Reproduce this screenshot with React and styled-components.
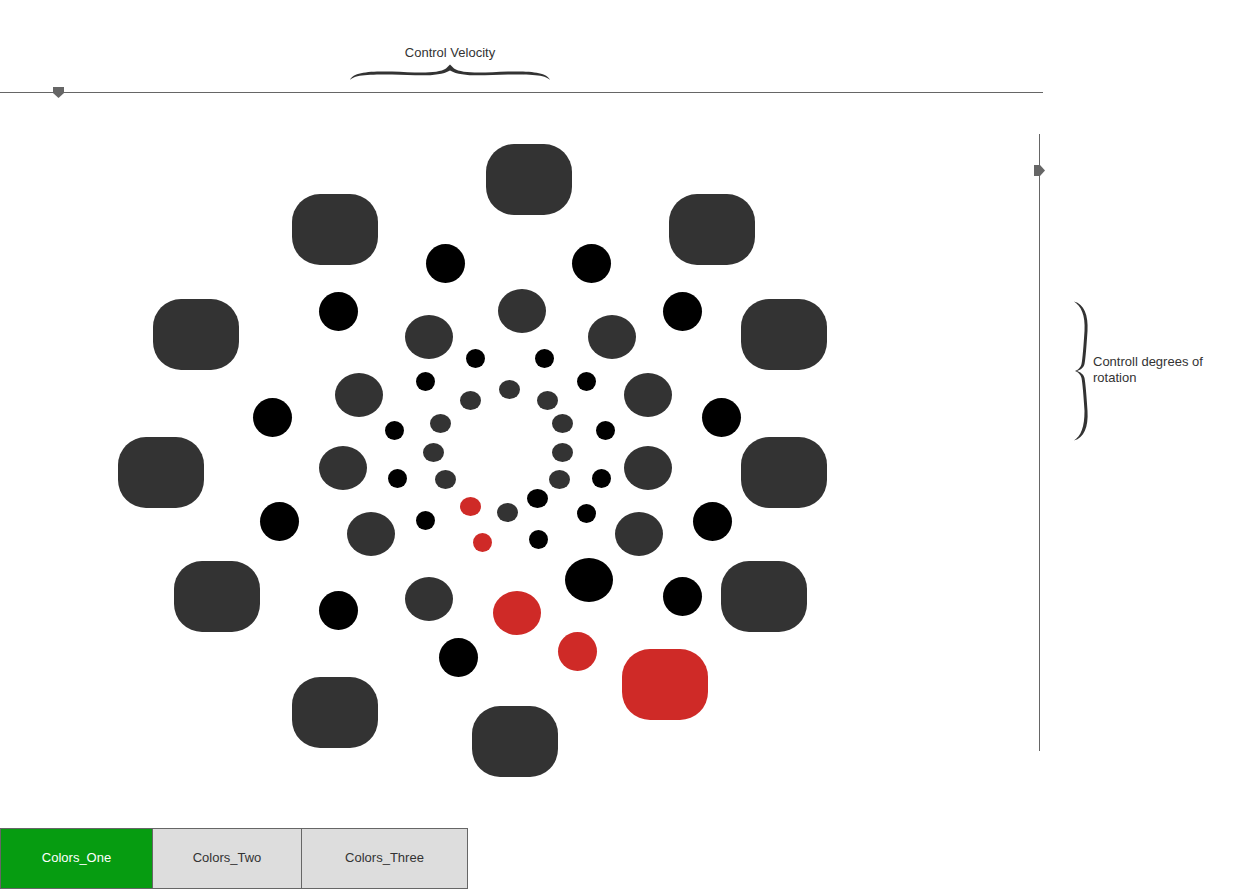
import React from "react";
import styled, { createGlobalStyle } from "styled-components";

const GlobalStyle = createGlobalStyle`
  html, body {
    margin: 0;
    padding: 0;
    background: #ffffff;
  }
  body {
    font-family: "Liberation Sans", Arial, sans-serif;
    color: #333333;
  }
`;

const COLORS = {
  dark: "#333333",
  black: "#000000",
  red: "#cf2a27",
};

// x / y are page coordinates, the canvas starts at y = 93
const CANVAS_TOP = 93;

const rects = [
  [486, 144, "dark"],
  [292, 194, "dark"],
  [669, 194, "dark"],
  [153, 299, "dark"],
  [741, 299, "dark"],
  [118, 437, "dark"],
  [741, 437, "dark"],
  [174, 561, "dark"],
  [721, 561, "dark"],
  [292, 677, "dark"],
  [472, 706, "dark"],
  [622, 649, "red"],
];

const dots = [
  // outer black ring
  [426, 244, 39, 39, "black"],
  [572, 244, 39, 39, "black"],
  [319, 292, 39, 39, "black"],
  [663, 292, 39, 39, "black"],
  [253, 398, 39, 39, "black"],
  [702, 398, 39, 39, "black"],
  [260, 502, 39, 39, "black"],
  [693, 502, 39, 39, "black"],
  [319, 591, 39, 39, "black"],
  [663, 577, 39, 39, "black"],
  [439, 638, 39, 39, "black"],
  [565, 558, 48, 44, "black"],
  // medium ring
  [498, 289, 48, 44, "dark"],
  [405, 315, 48, 44, "dark"],
  [588, 315, 48, 44, "dark"],
  [335, 373, 48, 44, "dark"],
  [624, 373, 48, 44, "dark"],
  [319, 446, 48, 44, "dark"],
  [624, 446, 48, 44, "dark"],
  [347, 512, 48, 44, "dark"],
  [615, 512, 48, 44, "dark"],
  [405, 577, 48, 44, "dark"],
  [493, 591, 48, 44, "red"],
  [558, 632, 39, 39, "red"],
  // small black ring
  [466, 349, 19, 19, "black"],
  [535, 349, 19, 19, "black"],
  [416, 372, 19, 19, "black"],
  [577, 372, 19, 19, "black"],
  [385, 421, 19, 19, "black"],
  [596, 421, 19, 19, "black"],
  [388, 469, 19, 19, "black"],
  [592, 469, 19, 19, "black"],
  [416, 511, 19, 19, "black"],
  [577, 504, 19, 19, "black"],
  [529, 530, 19, 19, "black"],
  [527, 489, 21, 19, "black"],
  // inner ring
  [499, 380, 21, 19, "dark"],
  [460, 391, 21, 19, "dark"],
  [537, 391, 21, 19, "dark"],
  [430, 414, 21, 19, "dark"],
  [552, 414, 21, 19, "dark"],
  [423, 443, 21, 19, "dark"],
  [552, 443, 21, 19, "dark"],
  [435, 470, 21, 19, "dark"],
  [549, 470, 21, 19, "dark"],
  [497, 503, 21, 19, "dark"],
  [460, 497, 21, 19, "red"],
  [473, 533, 19, 19, "red"],
];

const Page = styled.div`
  width: 1252px;
  height: 889px;
  display: flex;
  flex-direction: column;
  overflow: hidden;
`;

const Header = styled.div`
  height: 92px;
  display: flex;
  flex-direction: column;
  padding-top: 45px;
  box-sizing: border-box;
`;

const Annotation = styled.div`
  width: 200px;
  margin-left: 350px;
  display: flex;
  flex-direction: column;
  align-items: center;
`;

const Label = styled.div`
  font-size: 13px;
  line-height: 16px;
  color: #333333;
`;

const TopBrace = styled.svg`
  display: block;
  margin-top: 3px;
`;

const HTrack = styled.div`
  position: relative;
  width: 1043px;
  height: 1px;
  background: #666666;
`;

const HThumb = styled.svg`
  position: absolute;
  left: 53px;
  top: -5px;
`;

const Main = styled.div`
  height: 735px;
  display: flex;
  align-items: flex-start;
`;

const Canvas = styled.div`
  position: relative;
  width: 1034px;
  height: 100%;
  flex-shrink: 0;
`;

const Shape = styled.div`
  position: absolute;
  left: ${(p) => p.$x}px;
  top: ${(p) => p.$y - CANVAS_TOP}px;
  width: ${(p) => p.$w}px;
  height: ${(p) => p.$h}px;
  border-radius: ${(p) => (p.$rect ? "28px" : "50%")};
  background: ${(p) => COLORS[p.$color]};
`;

const VSlider = styled.div`
  position: relative;
  width: 11px;
  height: 617px;
  margin-top: 41px;
  flex-shrink: 0;
`;

const VTrack = styled.div`
  width: 1px;
  height: 100%;
  margin-left: 5px;
  background: #666666;
`;

const VThumb = styled.svg`
  position: absolute;
  left: 0;
  top: 31px;
`;

const SideNote = styled.div`
  display: flex;
  align-items: center;
  margin-top: 208px;
  margin-left: 28px;
  gap: 4px;
`;

const SideText = styled.div`
  font-size: 13px;
  line-height: 16px;
  color: #333333;
  width: 130px;
  margin-top: -2px;
`;

const ButtonGroup = styled.div`
  display: flex;
  width: fit-content;
  border: 1px solid #666666;
`;

const ColorButton = styled.button`
  width: ${(p) => p.$w}px;
  height: 59px;
  margin: 0;
  padding: 0 0 2px;
  border: none;
  border-left: ${(p) => (p.$first ? "none" : "1px solid #666666")};
  background: ${(p) => (p.$active ? "#069c11" : "#dddddd")};
  color: ${(p) => (p.$active ? "#ffffff" : "#333333")};
  font-family: "Liberation Sans", Arial, sans-serif;
  font-size: 13px;
  cursor: pointer;
`;

const App = () => {
  return (
    <Page>
      <GlobalStyle />
      <Header>
        <Annotation>
          <Label>Control Velocity</Label>
          <TopBrace width="200" height="17" viewBox="0 0 200 17">
            <path
              d="M0,16 C3,8 20,7 42,7.5 C66,8.5 88,10 96,4.5 L100,0.5 L104,4.5 C112,10 134,8.5 158,7.5 C180,7 197,8 200,16 C195,10.5 180,10.5 158,10.5 C134,11 112,13.5 100,6.5 C88,13.5 66,11 42,10.5 C20,10.5 5,10.5 0,16 Z"
              fill="#333333"
            />
          </TopBrace>
        </Annotation>
      </Header>

      <HTrack>
        <HThumb width="11" height="11" viewBox="0 0 11 11">
          <path d="M0,0 H11 V6 L5.5,11 L0,6 Z" fill="#666666" />
        </HThumb>
      </HTrack>

      <Main>
        <Canvas>
          {rects.map(([x, y, color], i) => (
            <Shape key={"r" + i} $x={x} $y={y} $w={86} $h={71} $rect $color={color} />
          ))}
          {dots.map(([x, y, w, h, color], i) => (
            <Shape key={"d" + i} $x={x} $y={y} $w={w} $h={h} $color={color} />
          ))}
        </Canvas>

        <VSlider>
          <VTrack />
          <VThumb width="11" height="11" viewBox="0 0 11 11">
            <path d="M0,0 H6 L11,5.5 L6,11 H0 Z" fill="#666666" />
          </VThumb>
        </VSlider>

        <SideNote>
          <svg width="16" height="140" viewBox="0 0 16 140">
            <path
              d="M1,0.5 C11,3 15.5,14 14.5,30 C13.5,45 12.5,58 11.5,63 C10.5,67 7,69 4,70 C7,71 10.5,73 11.5,77 C12.5,82 13.5,95 14.5,110 C15.5,126 11,137 1,139.5 C8,135 11.5,126 11.5,110 C10.5,95 9.5,82 8.5,77 C8,74 5,71 2,70 C5,69 8,66 8.5,63 C9.5,58 10.5,45 11.5,30 C12.5,14 8,5 1,0.5 Z"
              fill="#333333"
            />
          </svg>
          <SideText>Controll degrees of rotation</SideText>
        </SideNote>
      </Main>

      <ButtonGroup>
        <ColorButton $w={151} $first $active>
          Colors_One
        </ColorButton>
        <ColorButton $w={149}>Colors_Two</ColorButton>
        <ColorButton $w={166}>Colors_Three</ColorButton>
      </ButtonGroup>
    </Page>
  );
};

export default App;
